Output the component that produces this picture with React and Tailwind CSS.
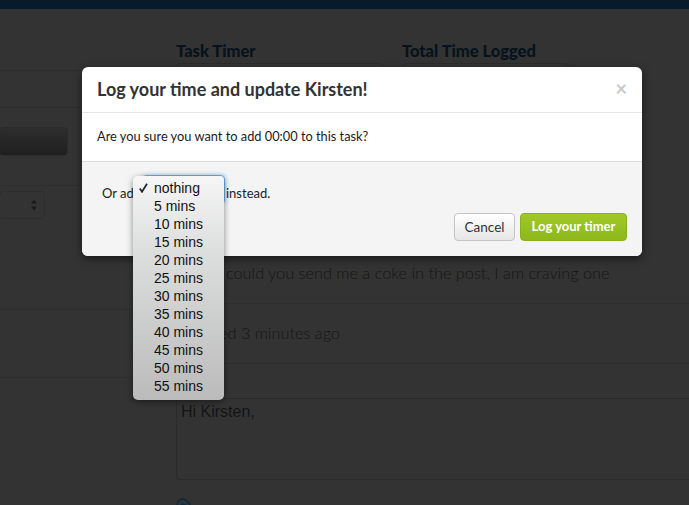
import React from 'react';

const MINUTES = ['5 mins', '10 mins', '15 mins', '20 mins', '25 mins', '30 mins', '35 mins', '40 mins', '45 mins', '50 mins', '55 mins'];

const Lato = "font-['Lato',sans-serif]";

/* dimmed page behind the modal */
const Background = () => (
  <div className="flex flex-col h-full">
    <div className="h-[9px] bg-[#071b2b] shrink-0" />
    <div className="flex flex-1 min-h-0">
      {/* Left column */}
      <div className="w-[176px] shrink-0">
        <div className="h-[62px] border-b border-[#2e2e2e]" />
        <div className="h-[37px] border-b border-[#2e2e2e]" />
        <div className="-ml-px mt-[19px] w-[69px] h-[29px] rounded-[4px] border border-[#2b2b2b] bg-gradient-to-b from-[#2e2e2e] to-[#1f1f1f]" />
        <div className="h-[30px] border-b border-[#2e2e2e]" />
        <div className="-ml-px mt-[5px] w-[46px] h-[28px] rounded-[4px] border border-[#2d2d2d] flex items-center justify-end pr-[7px]">
          <svg width="6" height="12" viewBox="0 0 6 12" fill="#1a1a1a">
            <path d="M3 0.5 6 4.5H0zM3 11.5 0 7.5H6z" />
          </svg>
        </div>
        <div className="h-[91px] border-b border-[#2e2e2e]" />
        <div className="h-[68px] border-b border-[#2e2e2e]" />
      </div>
      {/* Main column */}
      <div className={`flex-1 min-w-0 ${Lato}`}>
        <div className="flex gap-[19px] mt-[33px]">
          <div className="w-[207px]">
            <p className="text-[16.5px] leading-[18px] font-black text-[#06121c]">Task Timer</p>
            <div className="h-[30px] mt-[3px] rounded-[4px] border border-[#2d2d2d]" />
          </div>
          <div className="w-[167px]">
            <p className="text-[16.5px] leading-[18px] font-black text-[#06121c] whitespace-nowrap">Total Time Logged</p>
            <div className="h-[30px] mt-[3px] rounded-[4px] border border-[#2d2d2d]" />
          </div>
        </div>
        <p className="mt-[168px] pl-[50px] text-[16.3px] leading-[24px] font-light text-[#151515] whitespace-nowrap">
          could you send me a coke in the post, I am craving one
        </p>
        <div className="mt-[18px] border-t border-[#2e2e2e]" />
        <p className="mt-[17px] pl-[43px] text-[16.3px] leading-[24px] font-light text-[#151515] whitespace-nowrap">
          ed 3 minutes ago
        </p>
        <div className="mt-[18px] border-t border-[#2e2e2e]" />
        <div className="mt-[34px] h-[82px] rounded-l-[4px] border border-r-0 border-[#2b2b2b] px-[4px] py-[4px] font-['Liberation_Sans',sans-serif] text-[16px] leading-[18px] text-[#151515]">
          Hi Kirsten,
        </div>
        <svg className="mt-[18px]" width="16" height="12" viewBox="0 0 16 12" fill="none" stroke="#0a2c3e" strokeWidth="1.8">
          <path d="M1.2 8.5C0.6 3.5 4.5 0.2 8 1.2c2 0.6 3.5 2.3 6.5 6.3" />
          <path d="M5 7.5c1-1.5 3-1.5 4.5 0" />
        </svg>
      </div>
    </div>
  </div>
);

const App = () => (
  <div className="relative w-[689px] h-[505px] overflow-hidden bg-[#333333]">
    <Background />

    {/* Modal */}
    <div className={`absolute left-[82px] top-[67px] w-[560px] h-[189px] flex flex-col rounded-[6px] overflow-hidden bg-white shadow-[0_3px_9px_rgba(0,0,0,0.5)] ${Lato}`}>
      <div className="h-[46px] shrink-0 flex items-start justify-between pt-[12px] px-[15px] border-b border-[#e5e5e5]">
        <h3 className="text-[18px] leading-[20px] font-bold text-[#333333]">Log your time and update Kirsten!</h3>
        <span className="text-[20px] leading-[20px] font-bold text-[#c9c9c9] -mt-[1px]">×</span>
      </div>
      <div className="h-[49px] shrink-0 flex items-center pl-[15px] border-b border-[#dcdcdc] text-[12.8px] text-[#1a1a1a]">
        Are you sure you want to add 00:00 to this task?
      </div>
      <div className="flex-1 bg-[#f4f4f4]">
        <div className="flex items-start h-[30px] mt-[13px] pl-[20px] text-[13px] leading-[20px] text-[#222222]">
          <span className="w-[40px] mt-[8px]">Or add</span>
          <div className="w-[83px] h-[29px] rounded-[4px] border border-[#66afe9] shadow-[0_0_4px_rgba(102,175,233,0.6)] bg-white" />
          <span className="ml-px mt-[8px]">instead.</span>
        </div>
        <div className="flex justify-end gap-[5px] mt-[8px] pr-[15px]">
          <button className="w-[61px] h-[28px] rounded-[4px] border border-[#c4c4c4] bg-gradient-to-b from-white to-[#e6e6e6] text-[13.5px] text-[#333333]">
            Cancel
          </button>
          <button className="w-[107px] h-[28px] rounded-[4px] border border-[#8ab01c] bg-gradient-to-b from-[#a0c927] to-[#8eb81b] text-[13px] font-bold text-white">
            Log your timer
          </button>
        </div>
      </div>
    </div>

    {/* Native select menu */}
    <div className="absolute left-[133px] top-[176px] w-[91px] h-[224px] pt-[3px] rounded-[5px] bg-gradient-to-b from-[#f6f6f6] via-[#dcdddd] via-[35%] to-[#bbbbbb] shadow-[0_2px_6px_rgba(0,0,0,0.45)] font-['Liberation_Sans',sans-serif] text-[14px] leading-[18px] text-[#111111]">
      <div className="relative pl-[21px]">
        <svg className="absolute left-[6px] top-[4px]" width="9" height="10" viewBox="0 0 9 10" fill="none" stroke="#1c2530" strokeWidth="1.7">
          <path d="M0.8 5.5 3 8.8 8 0.8" />
        </svg>
        nothing
      </div>
      {MINUTES.map((label) => (
        <div key={label} className="pl-[21px]">{label}</div>
      ))}
    </div>
  </div>
);

export default App;
